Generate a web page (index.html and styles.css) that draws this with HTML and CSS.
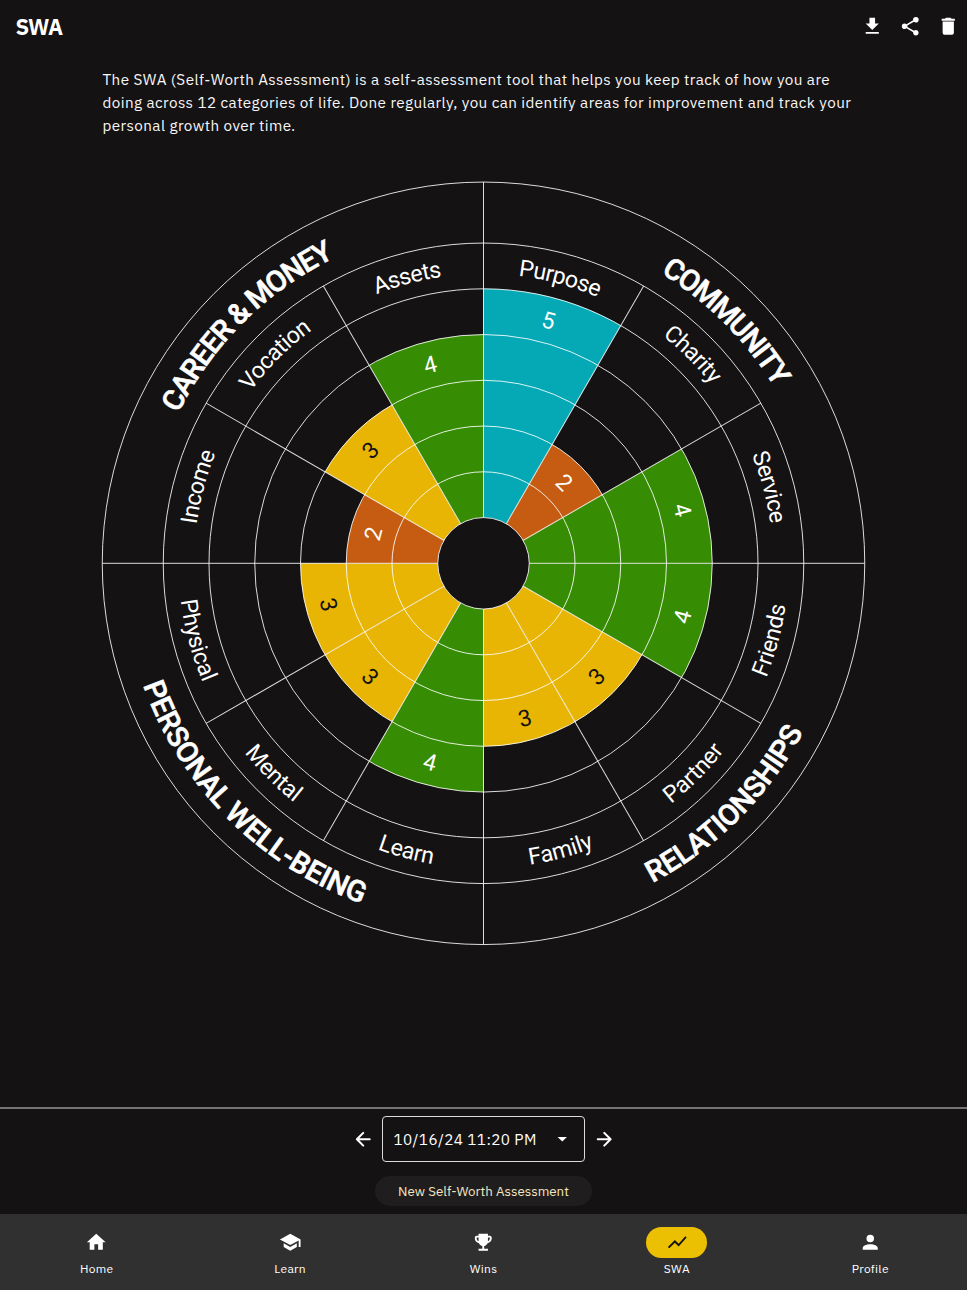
FILE: index.html
```html
<!DOCTYPE html>
<html lang="en">
<head>
<meta charset="utf-8">
<title>SWA</title>
<link rel="stylesheet" href="styles.css">
</head>
<body>
<div class="app">
  <header class="topbar">
    <h1 class="title">SWA</h1>
    <div class="actions">
      <svg class="icon" viewBox="0 0 24 24"><path d="M5 20h14v-2H5zM19 9h-4V3H9v6H5l7 7z"/></svg>
      <svg class="icon" viewBox="0 0 24 24"><path d="M18 16.08c-.76 0-1.44.3-1.96.77L8.91 12.7c.05-.23.09-.46.09-.7s-.04-.47-.09-.7l7.05-4.11c.54.5 1.25.81 2.04.81a3 3 0 1 0-3-3c0 .24.04.47.09.7L8.04 9.81C7.5 9.31 6.79 9 6 9a3 3 0 1 0 0 6c.79 0 1.5-.31 2.04-.81l7.12 4.15c-.05.21-.08.43-.08.66 0 1.61 1.31 2.91 2.92 2.91s2.92-1.3 2.92-2.91-1.31-2.92-2.92-2.92"/></svg>
      <svg class="icon" viewBox="0 0 24 24"><path d="M19 4h-3.5l-1-1h-5l-1 1H5v2h14M6 19a2 2 0 0 0 2 2h8a2 2 0 0 0 2-2V7H6z"/></svg>
    </div>
  </header>

  <main class="content">
    <p class="intro">
      <span class="line">The SWA (Self-Worth Assessment) is a self-assessment tool that helps you keep track of how you are</span>
      <span class="line">doing across 12 categories of life. Done regularly, you can identify areas for improvement and track your</span>
      <span class="line">personal growth over time.</span>
    </p>

    <svg class="wheel" viewBox="-483.500 -382.300 967 766">
      <defs>
        <path id="s5" d="M0 0V-274.5A274.5 274.5 0 0 1 137.25 -237.72Z"/>
        <path id="s4" d="M0 0V-228.75A228.75 228.75 0 0 1 114.38 -198.1Z"/>
        <path id="s3" d="M0 0V-183A183 183 0 0 1 91.5 -158.48Z"/>
        <path id="s2" d="M0 0V-137.25A137.25 137.25 0 0 1 68.63 -118.86Z"/>
        <path id="cat-top" d="M-289.5 0A289.5 289.5 0 0 1 289.5 0"/>
        <path id="cat-bottom" d="M-305 0A305 305 0 0 0 305 0"/>
        <path id="group-top" d="M-340 0A340 340 0 0 1 340 0"/>
        <path id="group-bottom" d="M-361.5 0A361.5 361.5 0 0 0 361.5 0"/>
      </defs>

      <g class="sectors">
        <use href="#s5" class="excellent"/>
        <use href="#s2" class="low" transform="rotate(30)"/>
        <use href="#s4" class="good" transform="rotate(60)"/>
        <use href="#s4" class="good" transform="rotate(90)"/>
        <use href="#s3" class="medium" transform="rotate(120)"/>
        <use href="#s3" class="medium" transform="rotate(150)"/>
        <use href="#s4" class="good" transform="rotate(180)"/>
        <use href="#s3" class="medium" transform="rotate(210)"/>
        <use href="#s3" class="medium" transform="rotate(240)"/>
        <use href="#s2" class="low" transform="rotate(270)"/>
        <use href="#s3" class="medium" transform="rotate(300)"/>
        <use href="#s4" class="good" transform="rotate(330)"/>
      </g>

      <g class="grid">
        <circle r="91.5"/><circle r="137.25"/><circle r="183"/><circle r="228.75"/>
        <circle r="274.5"/><circle r="320.25"/><circle r="381.25"/>
        <path d="M0 -381.25V381.25M-381.25 0H381.25"/>
        <path d="M0 -320.25V320.25" transform="rotate(30)"/>
        <path d="M0 -320.25V320.25" transform="rotate(60)"/>
        <path d="M0 -320.25V320.25" transform="rotate(120)"/>
        <path d="M0 -320.25V320.25" transform="rotate(150)"/>
        <circle class="hub" r="45.75"/>
      </g>

      <g class="categories upper">
        <text transform="rotate(15)"><textPath href="#cat-top" startOffset="50%">Purpose</textPath></text>
        <text transform="rotate(45)"><textPath href="#cat-top" startOffset="50%">Charity</textPath></text>
        <text transform="rotate(75)"><textPath href="#cat-top" startOffset="50%">Service</textPath></text>
        <text transform="rotate(-75)"><textPath href="#cat-top" startOffset="50%">Income</textPath></text>
        <text transform="rotate(-45)"><textPath href="#cat-top" startOffset="50%">Vocation</textPath></text>
        <text transform="rotate(-15)"><textPath href="#cat-top" startOffset="50%">Assets</textPath></text>
      </g>
      <g class="categories lower">
        <text transform="rotate(-75)"><textPath href="#cat-bottom" startOffset="50%">Friends</textPath></text>
        <text transform="rotate(-45)"><textPath href="#cat-bottom" startOffset="50%">Partner</textPath></text>
        <text transform="rotate(-15)"><textPath href="#cat-bottom" startOffset="50%">Family</textPath></text>
        <text transform="rotate(15)"><textPath href="#cat-bottom" startOffset="50%">Learn</textPath></text>
        <text transform="rotate(45)"><textPath href="#cat-bottom" startOffset="50%">Mental</textPath></text>
        <text transform="rotate(75)"><textPath href="#cat-bottom" startOffset="50%">Physical</textPath></text>
      </g>

      <g class="groups upper">
        <text transform="rotate(45)"><textPath href="#group-top" startOffset="50%">COMMUNITY</textPath></text>
        <text transform="rotate(-45)"><textPath href="#group-top" startOffset="50%">CAREER &amp; MONEY</textPath></text>
      </g>
      <g class="groups lower">
        <text transform="rotate(-45)"><textPath href="#group-bottom" startOffset="50%">RELATIONSHIPS</textPath></text>
        <text transform="rotate(45)"><textPath href="#group-bottom" startOffset="50%">PERSONAL WELL-BEING</textPath></text>
      </g>

      <g class="scores">
        <text transform="rotate(15)" y="-243.5">5</text>
        <text transform="rotate(45)" y="-106.3">2</text>
        <text transform="rotate(75)" y="-197.8">4</text>
        <text transform="rotate(-75)" y="214">4</text>
        <text class="dark" transform="rotate(-45)" y="168.2">3</text>
        <text class="dark" transform="rotate(-15)" y="168.2">3</text>
        <text transform="rotate(15)" y="214">4</text>
        <text class="dark" transform="rotate(45)" y="168.2">3</text>
        <text class="dark" transform="rotate(75)" y="168.2">3</text>
        <text transform="rotate(-75)" y="-106.3">2</text>
        <text class="dark" transform="rotate(-45)" y="-152">3</text>
        <text transform="rotate(-15)" y="-197.8">4</text>
      </g>
    </svg>
  </main>

  <section class="picker">
    <div class="date-row">
      <svg class="icon arrow" viewBox="0 0 24 24"><path d="M18.900 12H5.200M12 5.200L5.200 12l6.800 6.800"/></svg>
      <div class="select">
        <span class="date">10/16/24 11:20 PM</span>
        <svg class="icon" viewBox="0 0 24 24"><path d="M7 9.500l5 5 5-5z"/></svg>
      </div>
      <svg class="icon arrow" viewBox="0 0 24 24"><path d="M5.100 12h13.700M12 5.200l6.800 6.800-6.800 6.800"/></svg>
    </div>
    <button class="new-button">New Self-Worth Assessment</button>
  </section>

  <nav class="nav">
    <div class="tab">
      <span class="pill"><svg class="icon" viewBox="0 0 24 24"><path d="M10 20v-6h4v6h5v-8h3L12 3 2 12h3v8z"/></svg></span>
      <span class="label">Home</span>
    </div>
    <div class="tab">
      <span class="pill"><svg class="icon" viewBox="0 0 24 24"><path d="M12 3L1 9l11 6 9-4.91V17h2V9M5 13.18v4L12 21l7-3.82v-4L12 17z"/></svg></span>
      <span class="label">Learn</span>
    </div>
    <div class="tab">
      <span class="pill"><svg class="icon" viewBox="0 0 24 24"><path d="M19 5h-2V3H7v2H5c-1.1 0-2 .9-2 2v1c0 2.55 1.92 4.63 4.39 4.94.63 1.5 1.98 2.63 3.61 2.96V19H7v2h10v-2h-4v-3.1c1.63-.33 2.98-1.46 3.61-2.96C19.08 12.63 21 10.55 21 8V7c0-1.1-.9-2-2-2M5 8V7h2v3.82C5.84 10.4 5 9.3 5 8m14 0c0 1.3-.84 2.4-2 2.82V7h2z"/></svg></span>
      <span class="label">Wins</span>
    </div>
    <div class="tab active">
      <span class="pill"><svg class="icon" viewBox="0 0 24 24"><path d="M3.500 18.490l6-6.010 4 4L22 6.920l-1.410-1.410-7.090 7.970-4-4L2 16.990z"/></svg></span>
      <span class="label">SWA</span>
    </div>
    <div class="tab">
      <span class="pill"><svg class="icon" viewBox="0 0 24 24"><path d="M12 4a4 4 0 1 1 0 8 4 4 0 0 1 0-8m0 10c4.420 0 8 1.790 8 4v2H4v-2c0-2.210 3.580-4 8-4"/></svg></span>
      <span class="label">Profile</span>
    </div>
  </nav>
</div>
</body>
</html>
```
FILE: styles.css
```css
* { box-sizing: border-box; }
body {
  margin: 0;
  background: #141213;
  color: #fff;
  font-family: "IBM Plex Sans", Roboto, sans-serif;
}
.app { display: flex; flex-direction: column; width: 967px; height: 1290px; overflow: hidden; }
.icon { display: block; width: 22.5px; height: 22.5px; fill: currentColor; flex: none; }

.topbar { display: flex; align-items: center; justify-content: space-between; height: 53px; padding: 0 8px 0 15.5px; }
.title { margin: 0; font-size: 22px; font-weight: 700; line-height: 27px; letter-spacing: -.8px; }
.actions { display: flex; gap: 15.3px; }

.content { flex: 1; display: flex; flex-direction: column; align-items: center; padding-top: 15px; }
.intro { width: 762px; margin: 0; font-size: 15.25px; line-height: 22.75px; letter-spacing: .4px; color: #f8f6f6; }
.line { display: block; white-space: nowrap; }

.wheel { display: block; width: 967px; height: 766px; margin-top: 44.75px; flex: none; font-family: Roboto, sans-serif; }
.excellent { fill: #04a9b5; }
.good { fill: #368c02; }
.medium { fill: #e8b504; }
.low { fill: #c55c12; }
.grid { fill: none; stroke: #fff; stroke-opacity: .85; stroke-width: 1; }
.hub { fill: #141213; }
.wheel text { fill: #fff; text-anchor: middle; }
.categories text { font-size: 23.2px; }
.categories.upper { letter-spacing: -.55px; }
.categories.lower { letter-spacing: -.1px; }
.groups text { font-size: 29.2px; font-weight: 500; stroke: #fff; stroke-width: .6px; }
.groups.upper { letter-spacing: -1.35px; }
.groups.lower { letter-spacing: -.15px; }
.scores text { font-size: 23px; }
.wheel .dark { fill: #141213; }

.picker { display: flex; flex-direction: column; align-items: center; height: 107px; padding-top: 7px; border-top: 2px solid #757374; }
.date-row { display: flex; align-items: center; gap: 8px; }
.select { display: flex; align-items: center; justify-content: space-between; width: 203px; height: 45.5px; padding: 0 11px 0 10.5px; border: 1px solid #dddbdc; border-radius: 4px; }
.arrow { fill: none; stroke: currentColor; stroke-width: 2.2; stroke-linecap: round; stroke-linejoin: round; }
.date { font-size: 15.25px; letter-spacing: .4px; white-space: nowrap; }
.new-button { width: 217px; height: 30px; margin-top: 14.5px; padding: 0; border: 0; border-radius: 15px; background: #1f1d1e; color: #f5e7c0; font-family: inherit; font-size: 13.35px; line-height: 30px; white-space: nowrap; }

.nav { display: flex; height: 76px; background: #303030; }
.tab { flex: 1; display: flex; flex-direction: column; align-items: center; padding-top: 13px; }
.pill { display: flex; align-items: center; justify-content: center; width: 61px; height: 31px; border-radius: 16px; }
.active .pill { background: #ecc002; color: #141213; }
.label { margin-top: 2.5px; font-size: 12px; line-height: 16px; letter-spacing: .3px; }
```
